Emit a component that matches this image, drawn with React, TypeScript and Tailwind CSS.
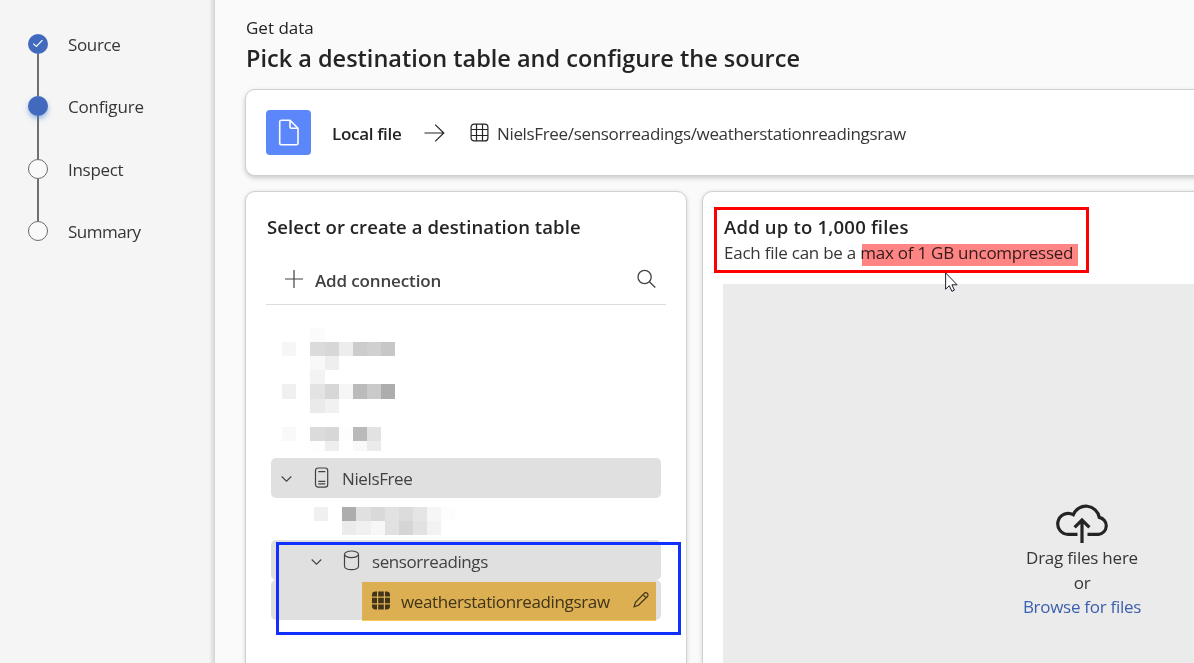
import type { ReactNode } from 'react';

type StepState = 'done' | 'current' | 'todo';

const steps: { label: string; state: StepState; height: string; tracking: string }[] = [
  { label: 'Source', state: 'done', height: 'h-[62px]', tracking: 'tracking-[-0.35px]' },
  { label: 'Configure', state: 'current', height: 'h-[63px]', tracking: 'tracking-[-0.2px]' },
  { label: 'Inspect', state: 'todo', height: 'h-[62px]', tracking: 'tracking-[-0.3px]' },
  { label: 'Summary', state: 'todo', height: 'h-[62px]', tracking: 'tracking-[-0.5px]' },
];

function StepDot({ state }: { state: StepState }) {
  if (state === 'todo') {
    return <span className="size-5 shrink-0 rounded-full border border-[#6b6b6b] bg-[#f9f9f9]" />;
  }
  if (state === 'current') {
    return <span className="z-10 size-5 shrink-0 rounded-full bg-[#4169bd] shadow-[0_3px_5px_rgba(65,125,210,0.5)]" />;
  }
  return (
    <span className="flex size-5 shrink-0 items-center justify-center rounded-full bg-[#4169bd]">
      <svg width="20" height="20" viewBox="0 0 20 20" fill="none" stroke="#fff" strokeWidth="1.2">
        <path d="M5.3 9.6 8.4 12.4 14.4 6.1" />
      </svg>
    </span>
  );
}

function Sidebar() {
  return (
    <aside className="relative h-full w-[215px] shrink-0 bg-[#f5f5f5] pt-[34px] pl-7">
      {steps.map((step, i) => (
        <div key={step.label} className={`flex gap-5 ${step.height}`}>
          <div className="flex w-5 flex-col items-center">
            <StepDot state={step.state} />
            {i < steps.length - 1 && <span className="w-0.5 flex-1 bg-[#707070]" />}
          </div>
          <span className={`h-6 text-[17px] leading-[22px] text-[#363636] ${step.tracking}`}>{step.label}</span>
        </div>
      ))}
      <div className="absolute inset-y-0 right-0 w-[6px] bg-gradient-to-r from-[#f5f5f5] to-[#d4d4d4]" />
    </aside>
  );
}

function TableIcon() {
  return (
    <svg width="20" height="20" viewBox="0 0 20 20" fill="none" stroke="#242424" strokeWidth="1.2">
      <rect x="1.1" y="1.1" width="16.8" height="16.8" rx="3" />
      <path d="M6.5 1.1v16.8M12.5 1.1v16.8M1.1 6.5h16.8M1.1 12.5h16.8" />
    </svg>
  );
}

function SourceBar() {
  return (
    <section className="flex h-[87px] w-[1100px] shrink-0 items-center rounded-[10px] border border-[#d0d0d0] bg-white pl-5 shadow-[0_2px_5px_rgba(0,0,0,0.2)]">
      <div className="flex size-[45px] items-center justify-center rounded-[4px] bg-[#5b87fb]">
        <svg width="22" height="27" viewBox="0 0 22 27" fill="none" stroke="#fff" strokeWidth="1.6">
          <path d="M3.4 1.3H12l8 8V24a1.7 1.7 0 0 1-1.7 1.7H3.4A1.7 1.7 0 0 1 1.7 24V3a1.7 1.7 0 0 1 1.7-1.7Z" />
          <path d="M12 1.5v6a1.7 1.7 0 0 0 1.7 1.7h6" />
        </svg>
      </div>
      <span className="ml-[21px] w-[92px] pt-[3px] text-[17px] font-semibold tracking-[-0.3px] text-[#242424]">Local file</span>
      <svg width="22" height="20" viewBox="0 0 22 20" fill="none" stroke="#242424" strokeWidth="1.2">
        <path d="M.5 10H20M11.2 1.6l8.6 8.4-8.6 8.4" />
      </svg>
      <span className="ml-[24px]">
        <TableIcon />
      </span>
      <span className="ml-[7px] pt-[3px] text-[17px] tracking-[-0.34px] whitespace-nowrap text-[#363636]">
        NielsFree/sensorreadings/weatherstationreadingsraw
      </span>
    </section>
  );
}

type Cell = [x: number, y: number, w: number, h: number, fill: string];

const listCells: Cell[] = [
  [45, 0, 15, 14, '#fbfbfb'],
  [17, 14, 14, 14, '#f6f6f6'],
  [45, 14, 15, 14, '#dbdbdb'],
  [60, 14, 14, 14, '#d7d7d7'],
  [74, 14, 14, 14, '#ededed'],
  [88, 14, 14, 14, '#cccccc'],
  [102, 14, 14, 14, '#d0d0d0'],
  [116, 14, 14, 14, '#c7c7c7'],
  [45, 28, 15, 14, '#f8f8f8'],
  [60, 28, 14, 14, '#eeeeee'],
  [45, 42, 15, 14, '#f3f3f3'],
  [17, 56, 14, 15, '#f0f0f0'],
  [45, 56, 15, 15, '#e3e3e3'],
  [60, 56, 14, 15, '#d7d7d7'],
  [74, 56, 14, 15, '#f6f6f6'],
  [88, 56, 14, 15, '#bbbbbb'],
  [102, 56, 14, 15, '#cacaca'],
  [116, 56, 14, 15, '#adadad'],
  [45, 71, 15, 14, '#eaeaea'],
  [60, 71, 14, 14, '#f1f1f1'],
  [17, 99, 14, 14, '#f9f9f9'],
  [45, 99, 15, 14, '#dbdbdb'],
  [60, 99, 14, 14, '#d7d7d7'],
  [74, 99, 14, 14, '#fdfdfd'],
  [88, 99, 14, 14, '#bababa'],
  [102, 99, 14, 14, '#e2e2e2'],
  [45, 113, 15, 10, '#fdfdfd'],
  [60, 113, 14, 10, '#eeeeee'],
  [88, 113, 14, 10, '#f9f9f9'],
  [102, 113, 14, 10, '#ebebeb'],
];

const childCells: Cell[] = [
  [49, 0, 14, 14, '#f0f0f0'],
  [77, 0, 14, 14, '#adadad'],
  [91, 0, 15, 14, '#e0e0e0'],
  [106, 0, 14, 14, '#d9d9d9'],
  [120, 0, 14, 14, '#e2e2e2'],
  [134, 0, 14, 14, '#dcdcdc'],
  [148, 0, 14, 14, '#e5e5e5'],
  [162, 0, 14, 14, '#f6f6f6'],
  [176, 0, 14, 14, '#fdfdfd'],
  [77, 14, 14, 14, '#ebebeb'],
  [91, 14, 15, 14, '#f0f0f0'],
  [106, 14, 14, 14, '#f7f7f7'],
  [120, 14, 14, 14, '#e1e1e1'],
  [134, 14, 14, 14, '#d5d5d5'],
  [148, 14, 14, 14, '#e2e2e2'],
  [162, 14, 14, 14, '#f2f2f2'],
];

function Mosaic({ cells, height }: { cells: Cell[]; height: number }) {
  return (
    <svg className="block" width="200" height={height} shapeRendering="crispEdges">
      {cells.map(([x, y, w, h, fill]) => (
        <rect key={`${x}-${y}`} x={x} y={y} width={w} height={h} fill={fill} />
      ))}
    </svg>
  );
}

function TreeRow({ className, children }: { className: string; children: ReactNode }) {
  return (
    <div className={`flex h-10 w-[390px] items-center rounded-[5px] bg-[#e0e0e0] text-[17px] text-[#424242] ${className}`}>
      {children}
    </div>
  );
}

function Chevron() {
  return (
    <svg className="mt-px -ml-px" width="12" height="8" viewBox="0 0 12 8" fill="none" stroke="#424242" strokeWidth="1.1">
      <path d="M1.7 1.5 6.5 6.2l4.8-4.7" />
    </svg>
  );
}

function DestinationPanel() {
  return (
    <section className="relative h-[520px] w-[442px] shrink-0 rounded-t-[10px] border border-[#d0d0d0] bg-white pt-[22px] pl-5 shadow-[0_1px_4px_rgba(0,0,0,0.16)]">
      <h2 className="h-[26px] pl-px text-[18.5px] leading-[26px] font-semibold tracking-[0.08px] whitespace-nowrap text-[#242424]">
        Select or create a destination table
      </h2>
      <div className="mt-[24px] flex h-[41px] w-[400px] items-start border-b border-[#dcdcdc] pl-[18px]">
        <svg className="mt-[5px]" width="20" height="20" viewBox="0 0 20 20" stroke="#424242" strokeWidth="1.2">
          <path d="M10 1v18M1 10h18" />
        </svg>
        <span className="ml-[11px] text-[17px] leading-[33px] font-semibold tracking-[-0.14px] text-[#424242]">Add connection</span>
        <svg className="mt-[5px] mr-[9px] ml-auto" width="20" height="20" viewBox="0 0 20 20" fill="none" stroke="#424242" strokeWidth="1.3">
          <circle cx="7.6" cy="8" r="6.6" />
          <path d="m12.4 12.8 5.9 5.7" />
        </svg>
      </div>
      <div className="-ml-[1px] pt-[23px]">
        <Mosaic cells={listCells} height={123} />
      </div>
      <div className="ml-[5px] pt-[7px]">
        <TreeRow className="pl-[10px]">
          <Chevron />
          <svg className="ml-[22px]" width="15" height="22" viewBox="0 0 15 22" fill="none" stroke="#424242" strokeWidth="1.2">
            <rect x="1.5" y="1" width="12.2" height="19.2" rx="2.6" />
            <path d="M4.3 4.7h7M4.3 14.4h7M4.3 16.8h7" />
          </svg>
          <span className="ml-[13px] pt-px tracking-[-0.38px]">NielsFree</span>
        </TreeRow>
      </div>
      <div className="-ml-[1px] pt-[9px] pb-[5px]">
        <Mosaic cells={childCells} height={28} />
      </div>
      <div className="ml-[5px]">
        <TreeRow className="pl-[40px] pt-[2px]">
          <Chevron />
          <svg className="ml-[21px]" width="17" height="22" viewBox="0 0 17 22" fill="none" stroke="#424242" strokeWidth="1.2">
            <ellipse cx="8.5" cy="4.3" rx="7" ry="3.3" />
            <path d="M1.5 4.3v12c0 1.9 3.1 3.4 7 3.4s7-1.5 7-3.4v-12" />
          </svg>
          <span className="ml-[12px] pt-px tracking-[-0.42px]">sensorreadings</span>
        </TreeRow>
        <TreeRow className="pl-[100px]">
          <svg width="20" height="20" viewBox="0 0 20 20" fill="#424242">
            <path d="M6 1.5v5H1V4.9A3.4 3.4 0 0 1 4.4 1.5ZM7.2 1.5h5.6v5H7.2ZM14 1.5h1.6A3.4 3.4 0 0 1 19 4.9V6.5h-5ZM1 7.7h5v5.6H1ZM7.2 7.7h5.6v5.6H7.2ZM14 7.7h5v5.6h-5ZM1 14.5h5v5H4.4A3.4 3.4 0 0 1 1 16.1ZM7.2 14.5h5.6v5H7.2ZM14 14.5h5v1.6a3.4 3.4 0 0 1-3.4 3.4H14Z" />
          </svg>
          <span className="ml-[10px] pt-[3px] tracking-[-0.36px]">weatherstationreadingsraw</span>
          <svg className="mr-[11px] mb-[1px] ml-auto" width="17" height="17" viewBox="0 0 17 17" fill="none" stroke="#424242" strokeWidth="1.2">
            <path d="M11.2 2.4a2.15 2.15 0 0 1 3.2 3.1L5.5 14.3 1.1 15.8l1.4-4.5ZM10 3.6l3.2 3.2" />
          </svg>
        </TreeRow>
      </div>
      <div className="absolute top-[390px] left-[116px] h-[39px] w-[294px] bg-[#fac85d] mix-blend-multiply" />
      <div className="absolute top-[350px] left-[30px] h-[93px] w-[405px] border-3 border-[#1030ff]" />
    </section>
  );
}

function UploadPanel() {
  return (
    <section className="relative h-[520px] w-[800px] shrink-0 rounded-t-[10px] border border-[#d0d0d0] bg-white pt-[22px] pl-5 shadow-[0_1px_4px_rgba(0,0,0,0.16)]">
      <h2 className="h-[26px] pl-px text-[18.5px] leading-[26px] font-semibold tracking-[0.2px] text-[#242424]">Add up to 1,000 files</h2>
      <p className="h-[26px] pl-px text-[17px] leading-[26px] tracking-[-0.24px] text-[#363636]">
        Each file can be a max of 1 GB uncompressed
      </p>
      <div className="mt-[18px] flex h-[400px] w-[718px] flex-col items-center bg-[#ebebeb] pt-[220px] text-[17px] leading-[25px] tracking-[-0.22px] text-[#363636]">
        <svg width="54" height="41" viewBox="0 0 54 41" fill="none" stroke="#242424" strokeWidth="3.2">
          <path d="M22.5 30.4h-9.2A10.5 10.5 0 1 1 18.3 10.7 13.6 13.6 0 0 1 44.3 13.4 8.6 8.6 0 0 1 43.5 30.4H32.5" />
          <path d="M27 39V16M19.6 23.4 27 16l7.4 7.4" />
        </svg>
        <span>Drag files here</span>
        <span>or</span>
        <a className="-mt-px tracking-[-0.28px] text-[#3b5fae]">Browse for files</a>
      </div>
      <div className="absolute top-[52px] left-[159px] h-[22px] w-[216px] bg-[#ff8484] mix-blend-multiply" />
      <div className="absolute top-[15px] left-[11px] h-[66px] w-[375px] border-3 border-[#ff0000]" />
      <svg className="absolute top-[80px] left-[242px]" width="14" height="21" viewBox="0 0 14 21" fill="#fff" stroke="#1c1c2c" strokeWidth="1">
        <path d="M.6.8v16.4l3.7-3.5 2.6 5.6 2.5-1.2-2.5-5.3h5.2Z" />
      </svg>
    </section>
  );
}

export default function App() {
  return (
    <div className="flex h-[663px] w-[1194px] overflow-hidden bg-[#fafafa] font-['Open_Sans','Noto_Sans',sans-serif]">
      <Sidebar />
      <main className="flex min-w-0 flex-1 flex-col overflow-hidden pt-4 pl-[30px]">
        <p className="h-6 shrink-0 pl-px text-[17px] leading-6 font-medium text-[#242424]">Get data</p>
        <h1 className="h-[49px] shrink-0 pl-px text-[23.5px] leading-9 font-semibold whitespace-nowrap text-[#242424]">
          Pick a destination table and configure the source
        </h1>
        <SourceBar />
        <div className="mt-[15px] flex shrink-0 gap-[15px]">
          <DestinationPanel />
          <UploadPanel />
        </div>
      </main>
    </div>
  );
}
